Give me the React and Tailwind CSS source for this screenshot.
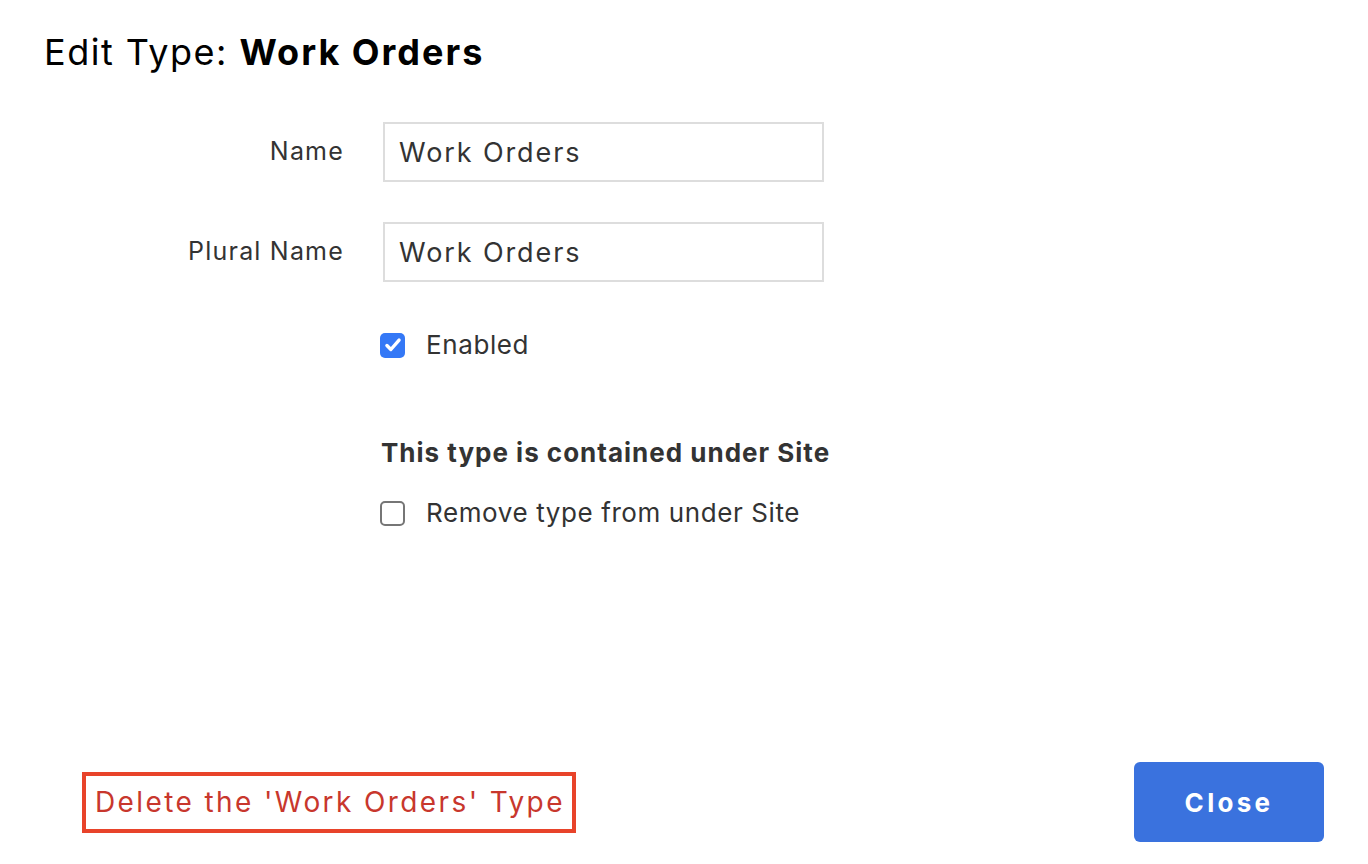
import { useState } from "react";

function Box({ checked, onChange }) {
  return (
    <button
      type="button"
      onClick={onChange}
      className={`w-[25px] h-[25px] rounded-[5px] flex items-center justify-center shrink-0 ${checked ? "bg-[#3478f6]" : "bg-white border-2 border-[#767676]"}`}
    >
      {checked && (
        <svg width="18" height="18" viewBox="0 0 16 16" fill="none">
          <path d="M2.6 8.4l3.5 3.6L13.4 3.6" stroke="white" strokeWidth="3" strokeLinecap="round" strokeLinejoin="round" />
        </svg>
      )}
    </button>
  );
}

export default function App() {
  const [name, setName] = useState("Work Orders");
  const [plural, setPlural] = useState("Work Orders");
  const [enabled, setEnabled] = useState(true);
  const [remove, setRemove] = useState(false);

  return (
    <div className="h-screen bg-white flex flex-col font-['Inter',sans-serif] text-[#333]">
      <h1 className="pl-[44px] pt-[31px] text-[36px] leading-[42px] text-black tracking-[1.5px]">
        Edit Type: <span className="font-bold tracking-[2px]">Work Orders</span>
      </h1>

      <div className="mt-[49px] flex flex-col gap-[40px]">
        <div className="flex items-center">
          <label className="w-[300px] ml-[44px] text-right text-[25px] tracking-[1.2px]">Name</label>
          <input value={name} onChange={(e) => setName(e.target.value)}
            className="ml-[39px] w-[441px] h-[60px] border-2 border-[#dddddd] px-[14px] text-[27px] tracking-[1.9px] text-[#333] outline-none" />
        </div>
        <div className="flex items-center">
          <label className="w-[300px] ml-[44px] text-right text-[25px] tracking-[1.2px]">Plural Name</label>
          <input value={plural} onChange={(e) => setPlural(e.target.value)}
            className="ml-[39px] w-[441px] h-[60px] border-2 border-[#dddddd] px-[14px] text-[27px] tracking-[1.9px] text-[#333] outline-none" />
        </div>
      </div>

      <div className="ml-[380px] mt-[50px] flex items-center gap-[21px]">
        <Box checked={enabled} onChange={() => setEnabled(!enabled)} />
        <span className="text-[26px] leading-[26px] tracking-[0.6px]">Enabled</span>
      </div>

      <div className="ml-[381px] mt-[79px] text-[26px] leading-[32px] font-bold tracking-[1px]">This type is contained under Site</div>

      <div className="ml-[380px] mt-[31px] flex items-center gap-[21px]">
        <Box checked={remove} onChange={() => setRemove(!remove)} />
        <span className="text-[26px] leading-[26px] tracking-[0.6px]">Remove type from under Site</span>
      </div>

      <div className="mt-auto pb-[22px] pl-[82px] pr-[44px] flex items-center justify-between">
        <button className="h-[61px] pl-[9px] pr-[7px] border-4 border-[#e8432a] text-[#c8372d] text-[28px] leading-[32px] tracking-[2.4px]">
          Delete the 'Work Orders' Type
        </button>
        <button className="w-[190px] h-[80px] rounded-[6px] bg-[#3a72de] text-white font-bold text-[26px] tracking-[3.3px]">
          Close
        </button>
      </div>
    </div>
  );
}
